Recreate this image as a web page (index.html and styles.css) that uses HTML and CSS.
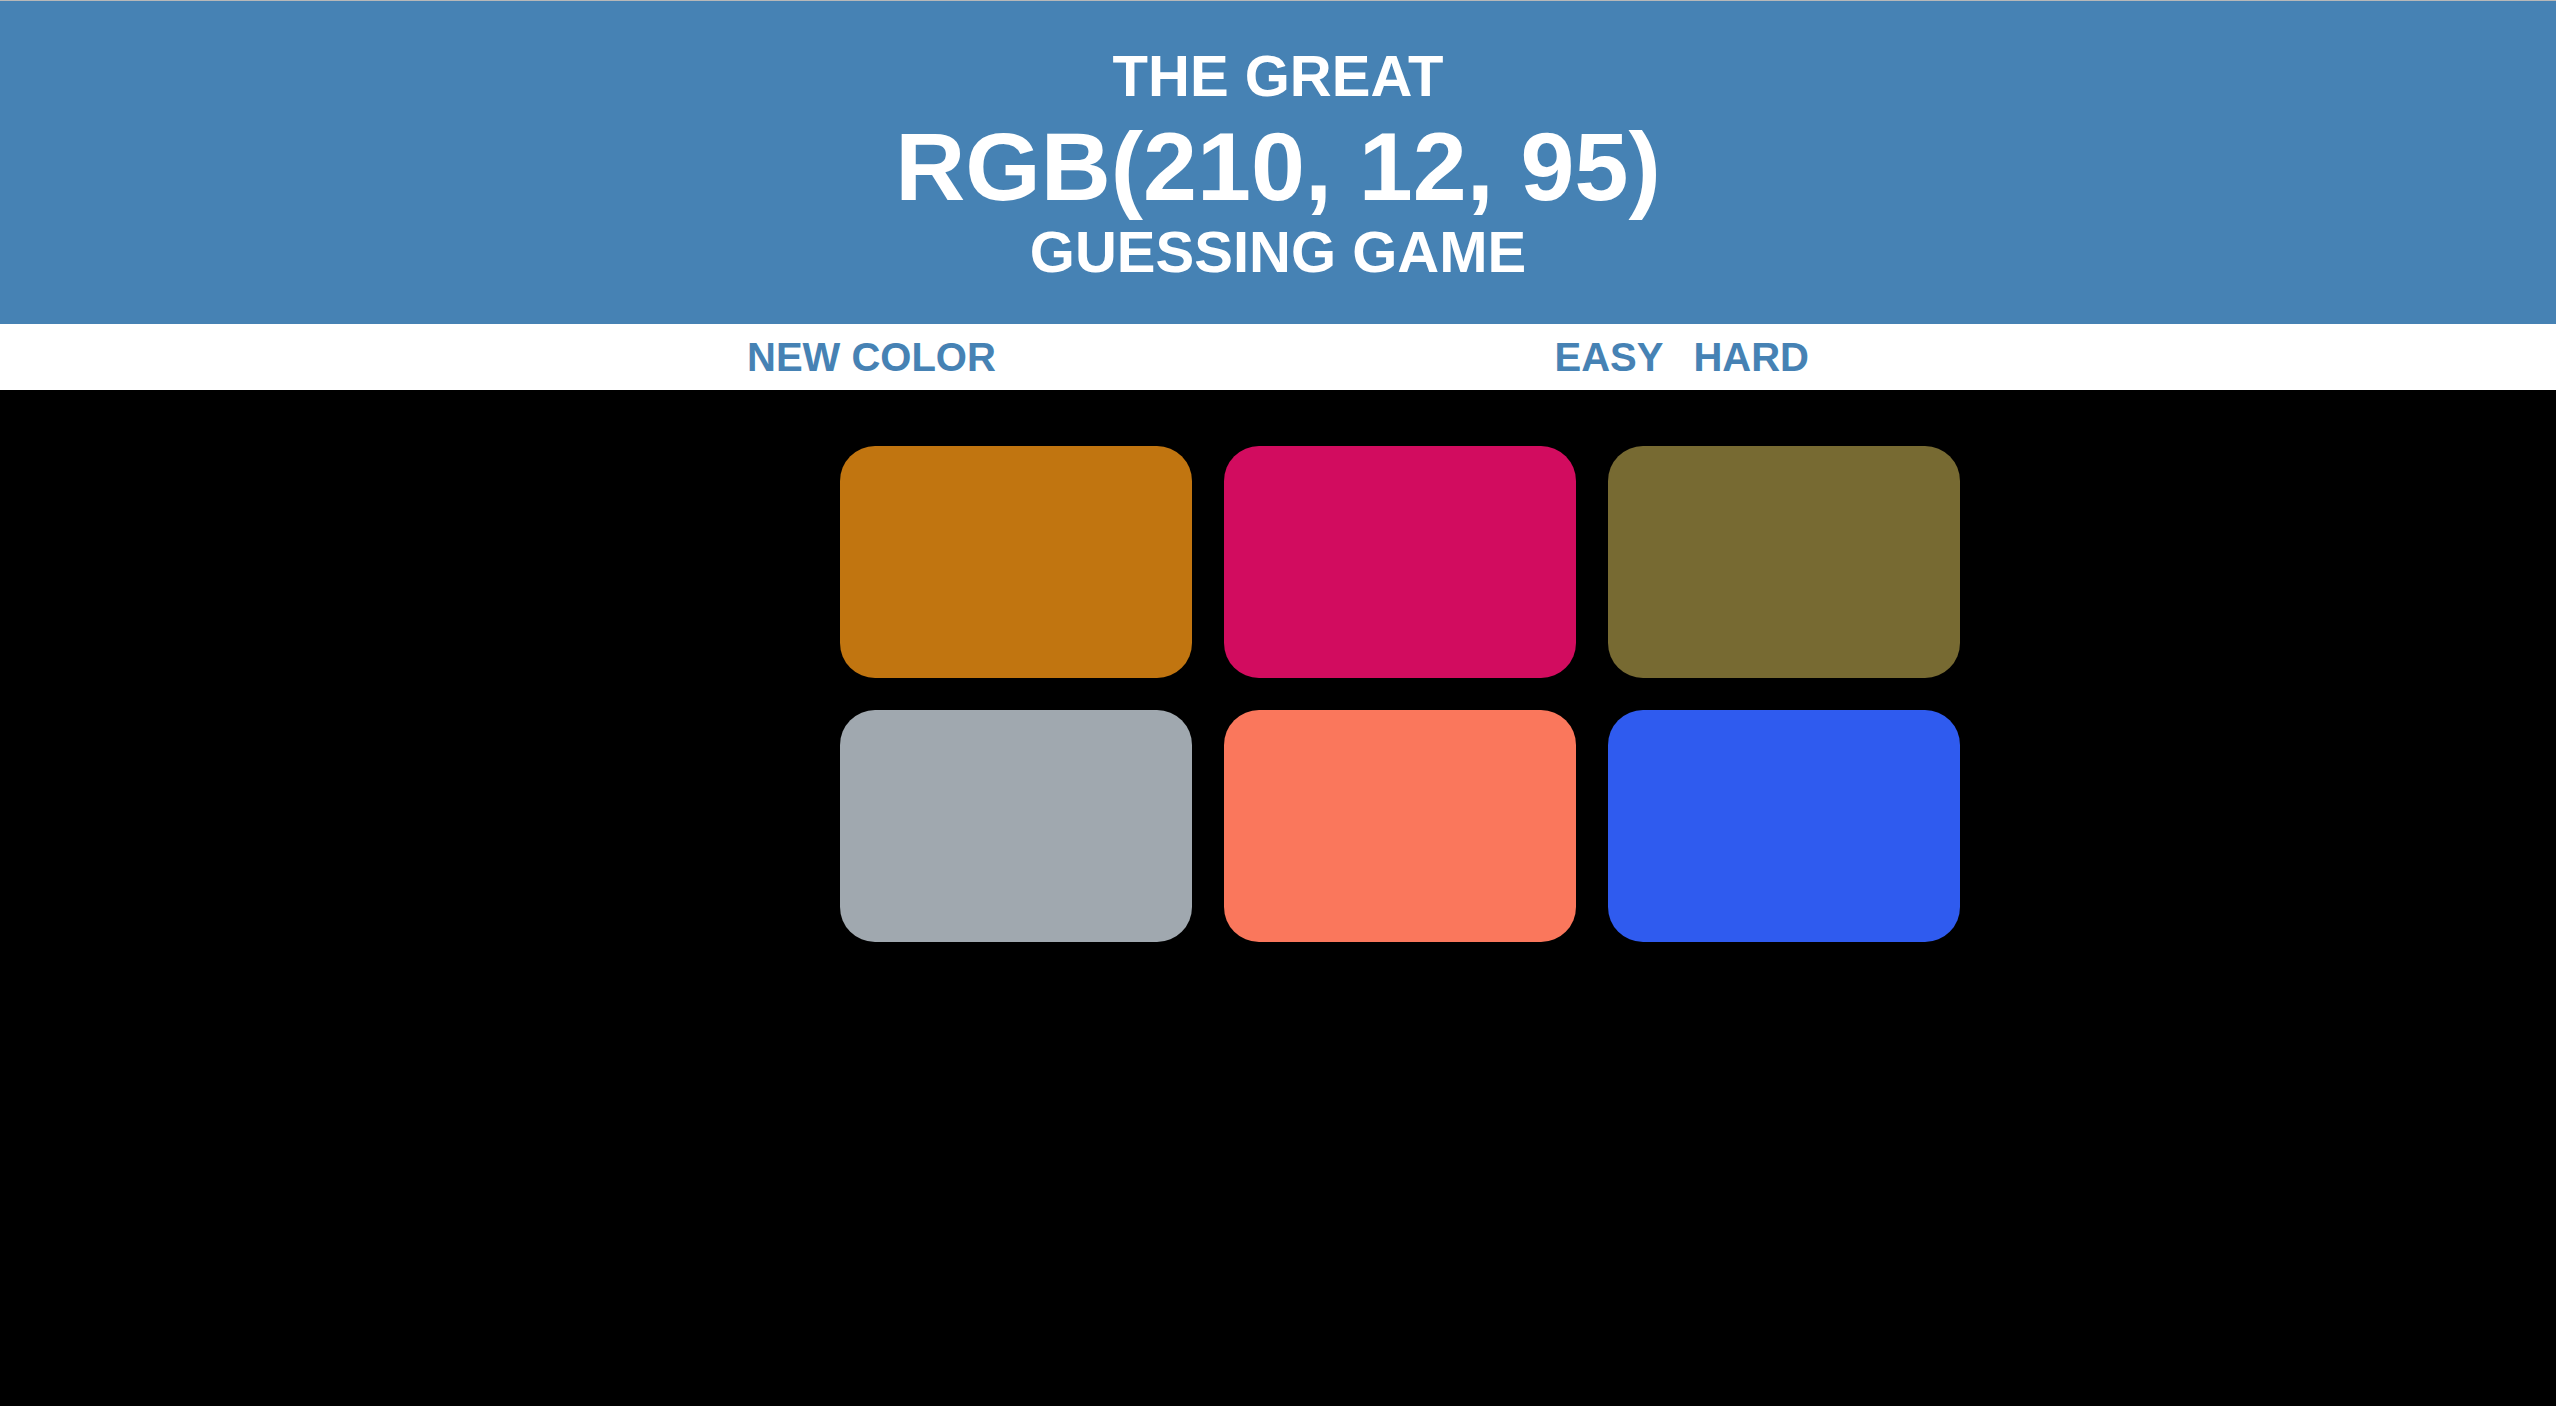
FILE: index.html
```html
<!DOCTYPE html>
<html lang="en">
<head>
<meta charset="utf-8">
<title>Color Game</title>
<link rel="stylesheet" href="styles.css">
</head>
<body>
  <header class="title">
    <div class="title-small">THE GREAT</div>
    <div class="title-big">RGB(210, 12, 95)</div>
    <div class="title-small title-last">GUESSING GAME</div>
  </header>
  <nav class="stripe">
    <div class="stripe-inner">
      <button class="btn">NEW COLOR</button>
      <div class="modes">
        <button class="btn">EASY</button>
        <button class="btn">HARD</button>
      </div>
    </div>
  </nav>
  <main class="board">
    <div class="square sq-orange"></div>
    <div class="square sq-pink"></div>
    <div class="square sq-olive"></div>
    <div class="square sq-gray"></div>
    <div class="square sq-salmon"></div>
    <div class="square sq-blue"></div>
  </main>
</body>
</html>
```

FILE: styles.css
```css
html, body {
  margin: 0;
  padding: 0;
}
body {
  background: #000;
  min-height: 100vh;
  font-family: "Liberation Sans", Arial, Helvetica, sans-serif;
  border-top: 1px solid #b8b8b8;
  box-sizing: border-box;
}
.title {
  background: #4682b4;
  color: #fff;
  text-align: center;
  font-weight: bold;
  padding: 43px 0 45px;
}
.title-small {
  font-size: 58px;
  line-height: 64px;
}
.title-big {
  font-size: 97px;
  line-height: 117px;
}
.title-last {
  line-height: 54px;
}
.stripe {
  background: #fff;
  height: 66px;
}
.stripe-inner {
  width: 1062px;
  margin: 0 auto;
  display: flex;
  justify-content: space-between;
  align-items: center;
  height: 66px;
}
.modes {
  display: flex;
  gap: 30px;
}
.btn {
  border: none;
  background: none;
  padding: 0;
  margin: 0;
  font-family: "Liberation Sans", Arial, Helvetica, sans-serif;
  font-weight: bold;
  font-size: 40px;
  line-height: 66px;
  color: #4682b4;
  cursor: pointer;
}
.board {
  display: grid;
  grid-template-columns: repeat(3, 352px);
  grid-auto-rows: 232px;
  gap: 32px;
  justify-content: center;
  padding: 56px 0 0 244px;
}
.square {
  border-radius: 35px;
}
.sq-orange { background: #c17510; }
.sq-pink { background: rgb(210, 12, 95); }
.sq-olive { background: #776a32; }
.sq-gray { background: #a0a8af; }
.sq-salmon { background: #fa775c; }
.sq-blue { background: #2f5bef; }
```
